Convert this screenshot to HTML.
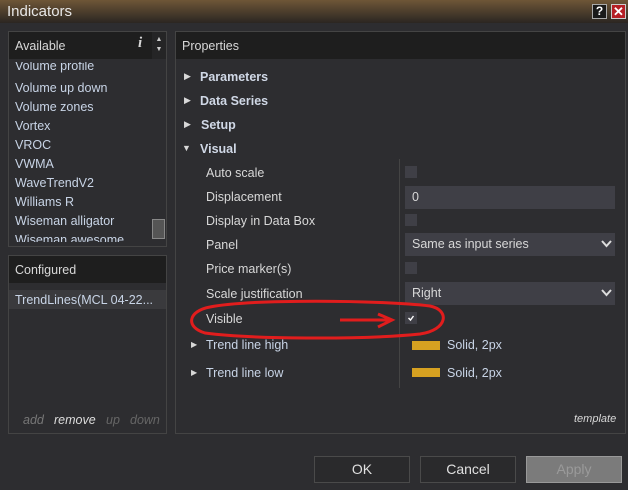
<!DOCTYPE html><html><head><style>
body{margin:0;width:628px;height:490px;background:#2d2d30;font-family:"Liberation Sans",sans-serif;font-size:12.5px;color:#d8d8d8;position:relative;overflow:hidden}
div,span{position:absolute;box-sizing:border-box}
.t{white-space:nowrap}
.li{left:15px;color:#c8d4e6}
.b{font-weight:bold;color:#d0d8e6}
.cb{width:12px;height:12px;background:#3f3f46}
.in{background:#3f3f46;height:23px;left:405px;width:210px;padding:4px 7px}
.sw{left:412px;width:28px;height:9px;background:#d6a121}
.btn{top:456px;width:96px;height:27px;border:1px solid #4a4a4a;background:#2a2a2c;text-align:center;line-height:25px;font-size:14px;color:#e0e0e0}
.chev{position:absolute;right:3px;top:7px}
</style></head><body>
<div style="left:0;top:0;width:628px;height:23px;background:linear-gradient(#6e5637,#2b2622)"></div>
<div class="t" style="left:7px;top:3px;font-size:15px;color:#e8e8e8">Indicators</div>
<div style="left:592px;top:4px;width:15px;height:15px;background:#1a1a1a;border:1px solid #aaa;color:#fff;font-weight:bold;font-size:12px;text-align:center;line-height:13px">?</div>
<div style="left:611px;top:4px;width:15px;height:15px;background:#b51f24;border:1px solid #ccc;color:#fff;font-weight:bold;font-size:13px;text-align:center;line-height:13px">✕</div>
<div style="left:8px;top:31px;width:159px;height:216px;border:1px solid #444;background:#2d2d30"></div>
<div style="left:9px;top:32px;width:143px;height:27px;background:#1e1e1e"></div>
<div class="t" style="left:15px;top:39px">Available</div>
<div class="t" style="left:138px;top:35px;font-family:'Liberation Serif';font-style:italic;font-weight:bold;font-size:15px">i</div>
<div style="left:152px;top:32px;width:14px;height:27px;background:#252526;color:#ccc;font-size:7px;text-align:center;line-height:10px;padding-top:3px">▲<br>▼</div>
<div style="left:9px;top:62px;width:143px;height:180px;overflow:hidden">
<div class="t li" style="left:6px;top:-3px">Volume profile</div>
<div class="t li" style="left:6px;top:19px">Volume up down</div>
<div class="t li" style="left:6px;top:38px">Volume zones</div>
<div class="t li" style="left:6px;top:57px">Vortex</div>
<div class="t li" style="left:6px;top:76px">VROC</div>
<div class="t li" style="left:6px;top:95px">VWMA</div>
<div class="t li" style="left:6px;top:114px">WaveTrendV2</div>
<div class="t li" style="left:6px;top:133px">Williams R</div>
<div class="t li" style="left:6px;top:152px">Wiseman alligator</div>
<div class="t li" style="left:6px;top:171px">Wiseman awesome</div>
</div>
<div style="left:152px;top:219px;width:13px;height:20px;background:#555;border:1px solid #888"></div>
<div style="left:8px;top:255px;width:159px;height:179px;border:1px solid #444"></div>
<div style="left:9px;top:256px;width:157px;height:27px;background:#1e1e1e"></div>
<div class="t" style="left:15px;top:263px">Configured</div>
<div style="left:9px;top:290px;width:157px;height:19px;background:#3a3a3d"></div>
<div class="t li" style="left:15px;top:293px">TrendLines(MCL 04-22...</div>
<div class="t" style="left:23px;top:413px;font-style:italic;color:#777">add</div>
<div class="t" style="left:54px;top:413px;font-style:italic;color:#ddd">remove</div>
<div class="t" style="left:106px;top:413px;font-style:italic;color:#666">up</div>
<div class="t" style="left:130px;top:413px;font-style:italic;color:#666">down</div>
<div style="left:175px;top:31px;width:451px;height:403px;border:1px solid #444"></div>
<div style="left:176px;top:32px;width:449px;height:27px;background:#1e1e1e"></div>
<div class="t" style="left:182px;top:39px">Properties</div>
<div class="t" style="left:184px;top:71px;font-size:9px">▶</div><div class="t b" style="left:200px;top:70px">Parameters</div>
<div class="t" style="left:184px;top:95px;font-size:9px">▶</div><div class="t b" style="left:200px;top:94px">Data Series</div>
<div class="t" style="left:184px;top:119px;font-size:9px">▶</div><div class="t b" style="left:201px;top:118px">Setup</div>
<div class="t" style="left:182px;top:143px;font-size:9px">▼</div><div class="t b" style="left:200px;top:142px">Visual</div>
<div style="left:399px;top:159px;width:1px;height:229px;background:#444"></div>
<div class="t" style="left:206px;top:166px">Auto scale</div><div class="cb" style="left:405px;top:166px"></div>
<div class="t" style="left:206px;top:190px">Displacement</div><div class="in" style="top:186px">0</div>
<div class="t" style="left:206px;top:238px">Panel</div><div class="in" style="top:233px">Same as input series<svg class="chev" width="11" height="8"><path d="M1 1 L5.5 6 L10 1" fill="none" stroke="#ddd" stroke-width="2"/></svg></div>
<div class="t" style="left:206px;top:214px">Display in Data Box</div><div class="cb" style="left:405px;top:214px"></div>
<div class="t" style="left:206px;top:262px">Price marker(s)</div><div class="cb" style="left:405px;top:262px"></div>
<div class="t" style="left:206px;top:287px">Scale justification</div><div class="in" style="top:282px">Right<svg class="chev" width="11" height="8"><path d="M1 1 L5.5 6 L10 1" fill="none" stroke="#ddd" stroke-width="2"/></svg></div>
<div class="t" style="left:206px;top:312px">Visible</div><div class="cb" style="left:405px;top:312px"><svg width="12" height="12" style="position:absolute;left:0;top:0"><path d="M3.5 6 L5.5 8 L8.5 4" fill="none" stroke="#fff" stroke-width="1.4"/></svg></div>
<div class="t" style="left:191px;top:340px;font-size:8px">▶</div><div class="t li" style="left:206px;top:338px">Trend line high</div>
<div class="sw" style="top:341px"></div><div class="t li" style="left:447px;top:338px">Solid, 2px</div>
<div class="t" style="left:191px;top:368px;font-size:8px">▶</div><div class="t li" style="left:206px;top:366px">Trend line low</div>
<div class="sw" style="top:368px"></div><div class="t li" style="left:447px;top:366px">Solid, 2px</div>
<div class="t" style="left:574px;top:413px;font-style:italic;font-size:11px">template</div>
<svg style="position:absolute;left:0;top:0" width="628" height="490"><path d="M210 307 C250 299,380 300,430 306 C450 310,448 330,420 334 C360 340,250 339,205 333 C185 327,188 311,210 307" fill="none" stroke="#e11d1d" stroke-width="3"/><path d="M340 320 H392 M378 314 L392 320 L378 327" fill="none" stroke="#e11d1d" stroke-width="3"/></svg>
<div class="btn" style="left:314px">OK</div>
<div class="btn" style="left:420px">Cancel</div>
<div class="btn" style="left:526px;background:#7b7b7b;color:#9a9a9a;border-color:#999">Apply</div>
</body></html>
